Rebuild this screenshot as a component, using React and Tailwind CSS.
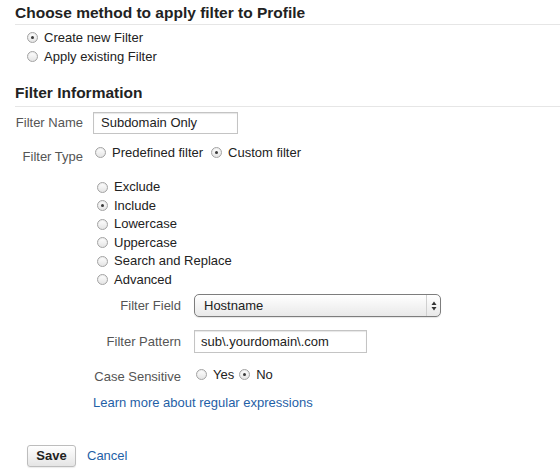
import React from 'react';

function Radio({ checked }) {
  return (
    <span className="relative inline-flex w-[11px] h-[11px] shrink-0 rounded-full border border-[#a3a3a3] bg-gradient-to-b from-white to-[#e4e4e4] items-center justify-center shadow-[inset_0_1px_1px_rgba(0,0,0,0.08)]">
      {checked && <span className="w-[3px] h-[3px] rounded-full bg-[#3a3a3a]" />}
    </span>
  );
}

function Option({ checked, label, className = '' }) {
  return (
    <label className={`flex items-center gap-[6px] ${className}`}>
      <Radio checked={checked} />
      <span>{label}</span>
    </label>
  );
}

const TYPES = [
  { label: 'Exclude', checked: false },
  { label: 'Include', checked: true },
  { label: 'Lowercase', checked: false },
  { label: 'Uppercase', checked: false },
  { label: 'Search and Replace', checked: false },
  { label: 'Advanced', checked: false },
];

export default function App() {
  return (
    <div className="w-[560px] h-[476px] overflow-hidden bg-white text-[13px] text-[#222] font-['Liberation_Sans','Helvetica',Arial,sans-serif]">
      {/* Method */}
      <div className="pl-[15px] pt-[3px]">
        <h2 className="text-[15.5px] font-bold leading-[20px] pb-[1px] border-b border-[#e6e6e6] text-[#222]">
          Choose method to apply filter to Profile
        </h2>
      </div>
      <div className="mt-[3px] pl-[27px] leading-[19px]">
        <Option checked label="Create new Filter" />
        <Option label="Apply existing Filter" />
      </div>

      {/* Filter information */}
      <div className="pl-[15px] mt-[17px]">
        <h2 className="text-[15.5px] font-bold leading-[20px] pb-[3px] border-b border-[#e6e6e6] text-[#222]">
          Filter Information
        </h2>
      </div>

      <div className="mt-[5px] flex items-center">
        <span className="w-[83px] pl-[15px] text-right text-[#555]">Filter Name</span>
        <div className="ml-[10px] w-[145px] h-[22px] border border-[#c4c4c4] shadow-[inset_0_1px_1px_rgba(0,0,0,0.1)] pl-[7px] flex items-center">
          Subdomain Only
        </div>
      </div>

      <div className="mt-[9px] flex items-start leading-[19px]">
        <span className="w-[83px] text-right text-[#555] pt-[4px]">Filter Type</span>
        <div className="ml-[12px] flex items-center">
          <Option label="Predefined filter" />
          <Option checked label="Custom filter" className="ml-[8px]" />
        </div>
      </div>

      <div className="mt-[12px] ml-[97px] leading-[18.5px]">
        {TYPES.map((t) => (
          <Option key={t.label} checked={t.checked} label={t.label} />
        ))}
      </div>

      <div className="mt-[5px] flex items-center">
        <span className="w-[181px] text-right text-[#555]">Filter Field</span>
        <div className="ml-[13px] w-[247px] h-[23px] rounded-[5px] border border-[#7d7d7d] bg-gradient-to-b from-white to-[#e9e9e9] flex items-center shadow-[0_1px_1px_rgba(0,0,0,0.1)]">
          <span className="flex-1 pl-[9px]">Hostname</span>
          <span className="w-[14px] h-full border-l border-[#d0d0d0] flex items-center justify-center">
            <svg width="6" height="10" viewBox="0 0 6 10">
              <path d="M3 0.5 L5.5 4 L0.5 4 Z" fill="#333" />
              <path d="M3 9.5 L5.5 6 L0.5 6 Z" fill="#333" />
            </svg>
          </span>
        </div>
      </div>

      <div className="mt-[13px] flex items-center">
        <span className="w-[181px] text-right text-[#555]">Filter Pattern</span>
        <div className="ml-[13px] w-[173px] h-[23px] border border-[#c4c4c4] shadow-[inset_0_1px_1px_rgba(0,0,0,0.1)] pl-[6px] flex items-center">
          sub\.yourdomain\.com
        </div>
      </div>

      <div className="mt-[12px] flex items-start leading-[19px]">
        <span className="w-[181px] text-right text-[#555] pt-[2px]">Case Sensitive</span>
        <div className="ml-[15px] flex items-center">
          <Option label="Yes" />
          <Option checked label="No" className="ml-[5px]" />
        </div>
      </div>

      <div className="mt-[7px] ml-[93px] leading-[19px]">
        <a className="text-[#1f5fa6]">Learn more about regular expressions</a>
      </div>

      <div className="mt-[33px] ml-[27px] flex items-center">
        <button className="w-[49px] h-[22px] rounded-[3px] border border-[#bdbdbd] bg-gradient-to-b from-white to-[#e5e5e5] font-bold text-[13px] text-[#222] shadow-[0_1px_1px_rgba(0,0,0,0.08)]">
          Save
        </button>
        <a className="ml-[11px] text-[#1f5fa6]">Cancel</a>
      </div>
    </div>
  );
}
